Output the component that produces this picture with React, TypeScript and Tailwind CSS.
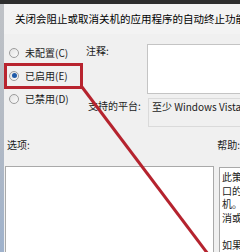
const helpLines = [
  "此策略设置指定 Windows 是否允许没有可见顶级窗",
  "口的控制台应用程序和 GUI 应用程序阻止或取消关",
  "机。默认情况下，如果这类应用程序尝试取",
  "消或阻止关机，系统将自动终止它们。",
  "",
  "如果启用此设置，则没有可见顶级窗口的应用程序",
  "从而阻止或取消关机。",
];

function Radio({ checked }: { checked?: boolean }) {
  return (
    <span className="w-[10px] h-[10px] rounded-full border border-[#9c9c9c] bg-gradient-to-br from-[#e2e2e2] to-[#fbfbfb] flex items-center justify-center shrink-0">
      {checked && <span className="w-[5px] h-[5px] rounded-full bg-[#1f5aa8]" />}
    </span>
  );
}

function PolicyIcon() {
  return (
    <svg width="12" height="11" viewBox="0 0 12 11">
      <rect x="0.5" y="0.5" width="11" height="10" fill="#f4f4f4" stroke="#6b6b6b" />
      <rect x="1" y="1" width="10" height="2" fill="#7d7d7d" />
      <path d="M7 5 L4 5 L4 9 L7 9" fill="none" stroke="#3f7f3a" strokeWidth="1.4" />
    </svg>
  );
}

export default function App() {
  const opts = [
    { label: "未配置(C)" },
    { label: "已启用(E)", checked: true },
    { label: "已禁用(D)" },
  ];

  return (
    <div className="w-[240px] h-[252px] relative overflow-hidden bg-[#f0f0f0] flex flex-col text-[10px] leading-[14px] text-[#1c1c1c] font-['Noto_Sans_CJK_SC','Noto_Sans',sans-serif]">
      <div className="h-[4px] bg-[#2e2e2e] shrink-0" />
      <div className="flex flex-1 min-h-0">
        {/* window edge */}
        <div className="w-[4px] shrink-0 bg-gradient-to-b from-[#bfc2c6] via-[#b3bac4] to-[#9fb2cc]" />
        <div className="flex flex-col flex-1 min-w-0">
          {/* Title */}
          <div className="h-[30px] flex items-center pl-[3px] gap-[8px] shrink-0 bg-[#f3f3f3] whitespace-nowrap">
            <PolicyIcon />
            <span className="text-[10.5px] text-black">关闭会阻止或取消关机的应用程序的自动终止功能</span>
          </div>

          {/* State + comment */}
          <div className="flex h-[93px] shrink-0">
            <div className="w-[78px] pt-[7px] flex flex-col shrink-0">
              {opts.map((o) => (
                <div key={o.label} className="h-[23px] flex items-center pl-[5px] gap-[6px] whitespace-nowrap">
                  <Radio checked={o.checked} />
                  <span>{o.label}</span>
                </div>
              ))}
            </div>
            <div className="flex flex-col pt-[10px] gap-[4px]">
              <div className="flex">
                <div className="w-[65px] pl-[4px] shrink-0">注释:</div>
                <div className="w-[120px] h-[50px] bg-white border border-[#c4c4c4] shrink-0" />
              </div>
              <div className="flex">
                <div className="w-[66px] pl-[6px] pt-[1px] shrink-0 whitespace-nowrap">支持的平台:</div>
                <div className="w-[120px] h-[29px] border border-[#dadada] pl-[3px] pt-[1px] whitespace-nowrap shrink-0">
                  至少 Windows Vista
                </div>
              </div>
            </div>
          </div>

          {/* Section labels */}
          <div className="h-[39px] flex pt-[11px] shrink-0">
            <div className="w-[215px] pl-[3px]">选项:</div>
            <div className="whitespace-nowrap">帮助:</div>
          </div>

          {/* Options + help */}
          <div className="flex flex-1 min-h-0 gap-[5px]">
            <div className="w-[209px] ml-[1px] shrink-0 bg-white border border-[#a9a9a9] border-b-0" />
            <div className="w-[60px] shrink-0 mt-[1px] bg-white border border-[#a9a9a9] border-b-0 pl-[2px] pt-[2px] leading-[13.5px] whitespace-nowrap">
              {helpLines.map((l, i) => (
                <div key={i} className="h-[13.5px]">{l}</div>
              ))}
            </div>
          </div>
        </div>
      </div>

      {/* red annotation */}
      <div className="absolute left-[4px] top-[63px] w-[79px] h-[26px] border-[3px] border-[#b8242f]" />
      <svg className="absolute inset-0 pointer-events-none" width="240" height="252" viewBox="0 0 240 252">
        <line x1="82" y1="87" x2="211" y2="258" stroke="#b5232e" strokeWidth="3" />
      </svg>
    </div>
  );
}
